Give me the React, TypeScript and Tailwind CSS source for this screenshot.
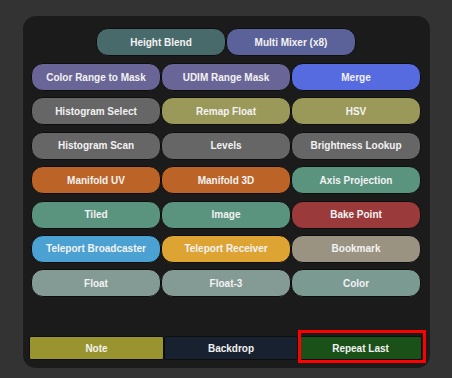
import React from 'react';

type Node = { label: string; color: string };

const topRow: Node[] = [
  { label: 'Height Blend', color: 'bg-[#496a6b]' },
  { label: 'Multi Mixer (x8)', color: 'bg-[#5b6199]' },
];

const grid: Node[] = [
  { label: 'Color Range to Mask', color: 'bg-[#6a6597]' },
  { label: 'UDIM Range Mask', color: 'bg-[#6a6597]' },
  { label: 'Merge', color: 'bg-[#566be0]' },
  { label: 'Histogram Select', color: 'bg-[#666666]' },
  { label: 'Remap Float', color: 'bg-[#9a995a]' },
  { label: 'HSV', color: 'bg-[#9a995a]' },
  { label: 'Histogram Scan', color: 'bg-[#666666]' },
  { label: 'Levels', color: 'bg-[#666666]' },
  { label: 'Brightness Lookup', color: 'bg-[#666666]' },
  { label: 'Manifold UV', color: 'bg-[#bc6427]' },
  { label: 'Manifold 3D', color: 'bg-[#bc6427]' },
  { label: 'Axis Projection', color: 'bg-[#5a947f]' },
  { label: 'Tiled', color: 'bg-[#5a947f]' },
  { label: 'Image', color: 'bg-[#5a947f]' },
  { label: 'Bake Point', color: 'bg-[#9a3a3b]' },
  { label: 'Teleport Broadcaster', color: 'bg-[#4aa1d2]' },
  { label: 'Teleport Receiver', color: 'bg-[#dda434]' },
  { label: 'Bookmark', color: 'bg-[#9a9381]' },
  { label: 'Float', color: 'bg-[#849a94]' },
  { label: 'Float-3', color: 'bg-[#849a94]' },
  { label: 'Color', color: 'bg-[#7b9a91]' },
];

function Pill({ node }: { node: Node }) {
  return (
    <button
      className={`${node.color} h-[28px] w-[130px] rounded-[12px] border border-[#0e0e0e] text-[10px] font-bold text-[#f2f2f2]`}
    >
      {node.label}
    </button>
  );
}

export default function App() {
  return (
    <div
      className="w-[452px] h-[378px] bg-[#333333] pt-[16px] pl-[23px]"
      style={{ fontFamily: '"Liberation Sans", Arial, sans-serif' }}
    >
      <div className="w-[407px] h-[352px] rounded-[13px] bg-[#1b1b1b] flex flex-col pt-[12px]">
        <div className="flex justify-center pr-[1px]">
          {topRow.map((n) => (
            <Pill key={n.label} node={n} />
          ))}
        </div>
        <div className="grid grid-cols-[130px_130px_130px] gap-y-[6.4px] mt-[7px] pl-[8px]">
          {grid.map((n) => (
            <Pill key={n.label} node={n} />
          ))}
        </div>
        <div className="flex mt-auto mb-[8px] pl-[6px]">
          <button className="w-[135px] h-[24px] rounded-[2px] border border-[#0e0e0e] bg-[#9a9430] text-[10px] font-bold text-[#f2f2f2]">
            Note
          </button>
          <button className="w-[134px] h-[24px] rounded-[2px] border border-[#0e0e0e] bg-[#172130] text-[10px] font-bold text-[#f2f2f2]">
            Backdrop
          </button>
          <div className="relative w-[123px] ml-[1px] flex">
            <button className="flex-1 h-[24px] rounded-[2px] border border-[#0e0e0e] bg-[#1a5119] text-[10px] font-bold text-[#f2f2f2]">
              Repeat Last
            </button>
            <div className="absolute -left-[1px] -right-[4px] -top-[6px] -bottom-[3px] border-[3px] border-[#ff0000] pointer-events-none" />
          </div>
        </div>
      </div>
    </div>
  );
}
